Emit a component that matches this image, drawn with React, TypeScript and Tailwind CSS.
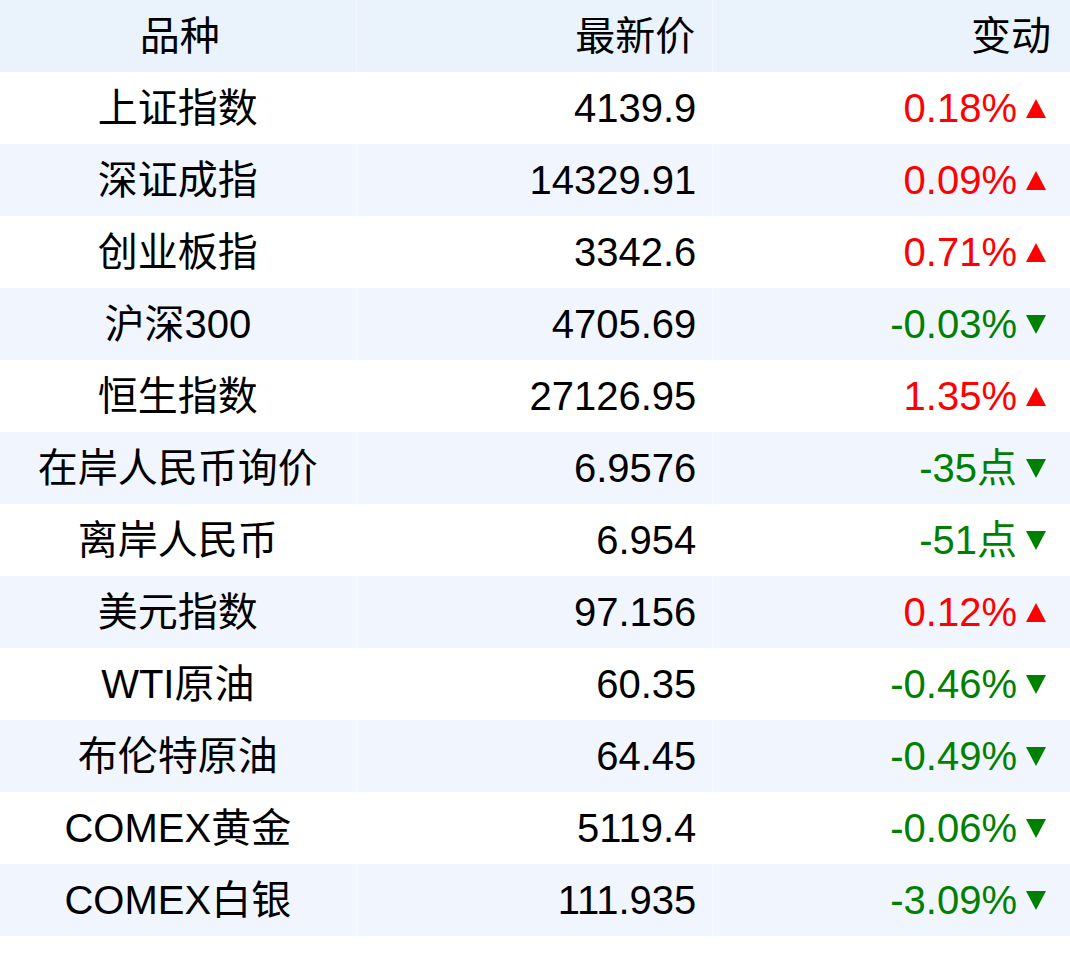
type Row = { name: string; price: string; change: string; up: boolean }

const ROWS: Row[] = [
  { name: '上证指数', price: '4139.9', change: '0.18%', up: true },
  { name: '深证成指', price: '14329.91', change: '0.09%', up: true },
  { name: '创业板指', price: '3342.6', change: '0.71%', up: true },
  { name: '沪深300', price: '4705.69', change: '-0.03%', up: false },
  { name: '恒生指数', price: '27126.95', change: '1.35%', up: true },
  { name: '在岸人民币询价', price: '6.9576', change: '-35点', up: false },
  { name: '离岸人民币', price: '6.954', change: '-51点', up: false },
  { name: '美元指数', price: '97.156', change: '0.12%', up: true },
  { name: 'WTI原油', price: '60.35', change: '-0.46%', up: false },
  { name: '布伦特原油', price: '64.45', change: '-0.49%', up: false },
  { name: 'COMEX黄金', price: '5119.4', change: '-0.06%', up: false },
  { name: 'COMEX白银', price: '111.935', change: '-3.09%', up: false },
]

const FONT = "font-['Liberation_Sans','Noto_Sans_CJK_SC',sans-serif]"

function Arrow({ up }: { up: boolean }) {
  return (
    <svg width="20" height="19" viewBox="0 0 20 19" className="ml-[9px] shrink-0">
      {up ? (
        <polygon points="10,0 20,19 0,19" fill="#ff0000" />
      ) : (
        <polygon points="0,0 20,0 10,19" fill="#008000" />
      )}
    </svg>
  )
}

export default function App() {
  return (
    <div className={`w-[1070px] h-[960px] bg-white text-black ${FONT}`}>
      <div className="grid grid-cols-3 h-[72px] bg-[#eaf2fb] text-[40px] leading-none">
        <div className="flex items-center justify-center pl-[4px] border-r border-white/40">品种</div>
        <div className="flex items-center justify-end pr-[17px] border-r border-white/40">最新价</div>
        <div className="flex items-center justify-end pr-[19px]">变动</div>
      </div>
      {ROWS.map((r, i) => (
        <div
          key={r.name}
          className={`grid grid-cols-3 h-[72px] text-[40px] leading-none ${
            i % 2 === 1 ? 'bg-[#f1f5fd]' : 'bg-white'
          }`}
        >
          <div className="flex items-center justify-center border-r border-white/40">{r.name}</div>
          <div className="flex items-center justify-end pr-[16px] border-r border-white/40">{r.price}</div>
          <div
            className={`flex items-center justify-end pr-[24px] ${
              r.up ? 'text-[#ff0000]' : 'text-[#008000]'
            }`}
          >
            <span>{r.change}</span>
            <Arrow up={r.up} />
          </div>
        </div>
      ))}
    </div>
  )
}
